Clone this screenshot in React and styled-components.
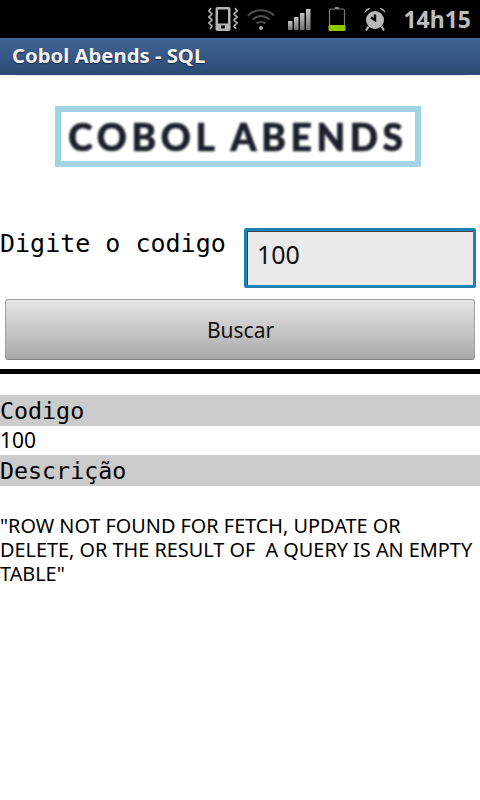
import React from 'react'
import styled, { createGlobalStyle } from 'styled-components'

const Global = createGlobalStyle`
  html, body { margin: 0; padding: 0; background: #fff; }
  body { font-family: "Noto Sans", "Open Sans", sans-serif; color: #000; }
`

const Page = styled.div`
  width: 480px;
  height: 800px;
  overflow: hidden;
  display: flex;
  flex-direction: column;
`

const StatusBar = styled.div`
  height: 38px;
  background: #000;
  display: flex;
  align-items: center;
  justify-content: flex-end;
  padding-right: 9px;
  box-sizing: border-box;
`

const Icons = styled.div`
  display: flex;
  align-items: center;
  height: 38px;
  margin-right: 17px;
`

const Clock = styled.span`
  font-size: 23px;
  font-weight: 700;
  color: #bdbdbd;
  line-height: 38px;
`

const TitleBar = styled.div`
  height: 37px;
  background: linear-gradient(#426595, #2a4a75);
  color: #f2f2f2;
  font-size: 20.3px;
  font-weight: 700;
  line-height: 35px;
  padding-left: 12px;
  box-sizing: border-box;
  text-shadow: 0 1px 1px #1a2a44;
`

const LogoArea = styled.div`
  height: 153px;
  margin: 0 15px;
  padding: 30px 0 0 40px;
  border-top: 1px solid #e6e6e6;
  box-sizing: border-box;
`

const LogoBox = styled.div`
  width: 366px;
  height: 61px;
  box-sizing: border-box;
  border: 6px solid #a1d5e3;
  background: #fff;
  display: flex;
  align-items: center;
  justify-content: center;
`

const LogoText = styled.span`
  font-family: "Lato", sans-serif;
  font-weight: 900;
  font-size: 37px;
  letter-spacing: 4.7px;
  color: #1c1f2b;
  white-space: nowrap;
  -webkit-text-stroke: 0.7px #1c1f2b;
  filter: blur(0.9px);
`

const FormRow = styled.div`
  display: flex;
  justify-content: space-between;
  align-items: flex-start;
  height: 71px;
  padding-right: 4px;
  box-sizing: border-box;
`

const Label = styled.label`
  font-family: "DejaVu Sans Mono", monospace;
  font-size: 25px;
  line-height: 30px;
  margin-top: 1px;
`

const Input = styled.input`
  width: 232px;
  height: 60px;
  box-sizing: border-box;
  margin: 0;
  padding: 0 0 8px 10px;
  border: 3px solid #1a82b4;
  box-shadow: inset 1px 1px 0 #444;
  background: #eaeaea;
  border-radius: 2px;
  outline: none;
  font-family: "Noto Sans", sans-serif;
  font-size: 25px;
  color: #111;
`

const Button = styled.button`
  display: block;
  width: 470px;
  height: 61px;
  margin: 0 0 0 5px;
  box-sizing: border-box;
  border: 1px solid #a0a0a0;
  border-bottom-color: #828282;
  border-radius: 3px;
  background: linear-gradient(#e6e6e6, #a9a9a9);
  font-family: "Noto Sans", sans-serif;
  font-size: 21px;
  color: #111;
  padding: 0 0 0 1px;
`

const Rule = styled.hr`
  height: 5px;
  margin: 9px 0 21px;
  border: 0;
  background: #000;
`

const FieldHead = styled.div`
  height: 31px;
  background: #cbcbcb;
  font-family: "DejaVu Sans Mono", monospace;
  font-size: 23.3px;
  line-height: 32px;
`

const FieldValue = styled.div`
  height: 29px;
  font-size: 21px;
  line-height: 28px;
`

const Description = styled.p`
  margin: 28px 0 0;
  padding-right: 5px;
  font-size: 19.85px;
  line-height: 24px;
  white-space: pre-wrap;
`

const Vibrate = () => (
  <svg width="30" height="24" viewBox="0 0 30 24" fill="none">
    <path d="M3 1l-2 3 3 3-3 3 3 3-3 3 3 3-2 3M27 1l2 3-3 3 3 3-3 3 3 3-3 3 2 3" stroke="#b5b5b5" strokeWidth="1.6" />
    <rect x="7.5" y="0" width="15" height="24" rx="2" fill="#b5b5b5" />
    <rect x="10" y="2.5" width="10" height="14" fill="#000" />
    <rect x="13" y="18.500" width="4" height="3" fill="#000" />
  </svg>
)

const Wifi = () => (
  <svg width="28" height="22" viewBox="0 0 28 22" fill="none" stroke="#4b4b4b" strokeWidth="2.2">
    <path d="M1 7.500C8.500 0.500 19.500 0.500 27 7.500" />
    <path d="M5.500 11.500C10.500 7 17.500 7 22.500 11.500" />
    <path d="M9.500 15.500C12 13.500 16 13.500 18.500 15.500" />
    <circle cx="14" cy="20" r="2" fill="#a8a8a8" stroke="none" />
  </svg>
)

const Signal = () => (
  <svg width="23" height="21" viewBox="0 0 23 21">
    <defs>
      <linearGradient id="bars" x1="0" y1="0" x2="0" y2="1">
        <stop offset="0" stopColor="#c4c4c4" />
        <stop offset="1" stopColor="#707070" />
      </linearGradient>
    </defs>
    <rect x="0" y="12" width="4.500" height="9" fill="url(#bars)" />
    <rect x="6" y="8" width="4.500" height="13" fill="url(#bars)" />
    <rect x="12" y="4" width="4.500" height="17" fill="url(#bars)" />
    <rect x="18" y="0" width="4.500" height="21" fill="url(#bars)" />
  </svg>
)

const Battery = () => (
  <svg width="18" height="24" viewBox="0 0 18 24">
    <rect x="7" y="0" width="4" height="2" fill="#8a8a8a" />
    <rect x="1.500" y="2" width="15" height="21" rx="1.500" fill="#000" stroke="#7a7a7a" strokeWidth="1.200" />
    <rect x="0.500" y="18" width="17" height="6" rx="1.500" fill="#8fc800" />
  </svg>
)

const Alarm = () => (
  <svg width="22" height="24" viewBox="0 0 22 24">
    <path d="M0.500 6C1 3 3.500 0.500 6.500 1zM21.500 6C21 3 18.500 0.500 15.500 1z" fill="#b8b8b8" />
    <circle cx="11" cy="13" r="9" fill="#b8b8b8" />
    <path d="M11 7.500v5.500l-4-2.500" stroke="#000" strokeWidth="2.400" fill="none" />
    <path d="M4.500 19.500l-2.500 4M17.500 19.500l2.500 4" stroke="#b8b8b8" strokeWidth="2" />
  </svg>
)

const IconSlot = styled.span`
  display: flex;
  margin-right: ${(p) => p.$gap}px;
`

export default function App() {
  return (
    <Page>
      <Global />
      <StatusBar>
        <Icons>
          <IconSlot $gap={9}><Vibrate /></IconSlot>
          <IconSlot $gap={13}><Wifi /></IconSlot>
          <IconSlot $gap={17}><Signal /></IconSlot>
          <IconSlot $gap={18}><Battery /></IconSlot>
          <IconSlot $gap={0}><Alarm /></IconSlot>
        </Icons>
        <Clock>14h15</Clock>
      </StatusBar>
      <TitleBar>Cobol Abends - SQL</TitleBar>
      <LogoArea>
        <LogoBox>
          <LogoText>COBOL ABENDS</LogoText>
        </LogoBox>
      </LogoArea>
      <FormRow>
        <Label>Digite o codigo</Label>
        <Input defaultValue="100" />
      </FormRow>
      <Button>Buscar</Button>
      <Rule />
      <FieldHead>Codigo</FieldHead>
      <FieldValue>100</FieldValue>
      <FieldHead>Descrição</FieldHead>
      <Description>"ROW NOT FOUND FOR FETCH, UPDATE OR DELETE, OR THE RESULT OF  A QUERY IS AN EMPTY TABLE"</Description>
    </Page>
  )
}
